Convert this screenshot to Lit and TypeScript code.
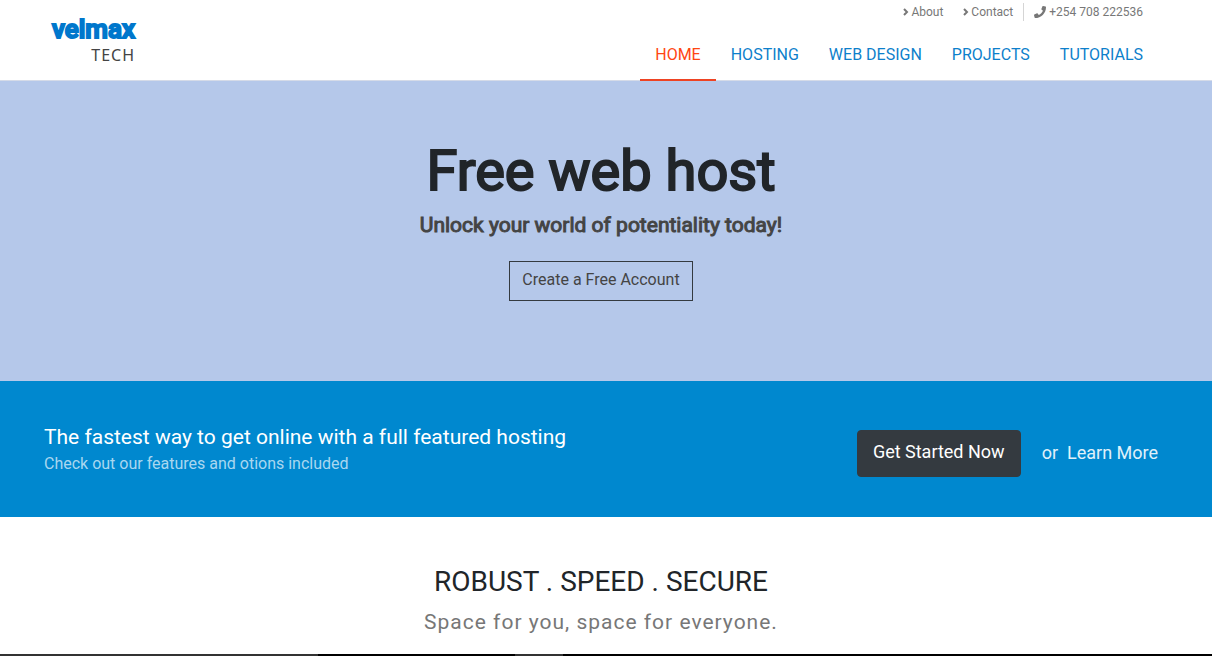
import { LitElement, html, css, svg } from "lit";
import { customElement } from "lit/decorators.js";

const NAV = ["Home", "Hosting", "Web Design", "Projects", "Tutorials"];

const chevron = html`<svg class="chevron" viewBox="0 0 6 8" aria-hidden="true">
  ${svg`<path d="M1 1l3 3-3 3" fill="none" stroke="currentColor" stroke-width="2" />`}
</svg>`;

const phone = html`<svg class="phone" viewBox="0 0 512 512" aria-hidden="true">
  ${svg`<path fill="currentColor" d="M493.4 24.6l-104-24c-11.3-2.6-22.9 3.3-27.5 13.9l-48 112c-4.2 9.8-1.4 21.3 6.9 28l60.6 49.6c-36 76.7-98.9 140.5-177.2 177.2l-49.6-60.6c-6.8-8.3-18.2-11.1-28-6.9l-112 48C3.9 366.5-2 378.1.6 389.4l24 104C27.1 504.2 36.7 512 48 512c256.1 0 464-207.5 464-464 0-11.2-7.7-20.9-18.6-23.4z" />`}
</svg>`;

@customElement("app-root")
export class AppRoot extends LitElement {
  static styles = css`
    :host {
      display: flex;
      flex-direction: column;
      min-height: 100vh;
      box-sizing: border-box;
      background: #fff;
      color: #212529;
      font-family: Roboto, "Liberation Sans", sans-serif;
      font-size: 16px;
      line-height: 24px;
    }
    * {
      box-sizing: border-box;
    }
    a {
      color: inherit;
      text-decoration: none;
    }
    h1,
    h2,
    p,
    ul {
      margin: 0;
      padding: 0;
    }
    ul {
      list-style: none;
    }
    .header {
      display: flex;
      justify-content: space-between;
      border-bottom: 1px solid #d5dbe8;
      padding: 0 54px 0 44px;
      height: 81px;
    }
    .logo {
      display: flex;
      flex-direction: column;
      align-items: flex-end;
      padding: 14px 0 0 8px;
    }
    .brand {
      color: #0077cc;
      font-size: 26px;
      font-weight: 500;
      line-height: 30px;
      -webkit-text-stroke: 2px #0077cc;
      stroke-linejoin: round;
    }
    .sub {
      color: #444;
      font-family: "Noto Sans", sans-serif;
      font-size: 16px;
      line-height: 22px;
      letter-spacing: 1px;
    }
    .menus {
      display: flex;
      flex-direction: column;
      align-items: flex-end;
      justify-content: space-between;
      margin-bottom: -1px;
    }
    .top {
      display: flex;
      align-items: center;
      padding-right: 15px;
      height: 24px;
      color: #777;
      font-size: 12px;
      line-height: 18px;
    }
    .top a {
      display: flex;
      align-items: center;
      gap: 2px;
    }
    .top .contact {
      margin-left: 20px;
    }
    .top .tel {
      gap: 3px;
      margin-left: 10px;
      padding-left: 10px;
      border-left: 1px solid #d5d5d5;
    }
    .chevron {
      width: 6px;
      height: 8px;
    }
    .phone {
      width: 12px;
      height: 12px;
    }
    .nav {
      display: flex;
    }
    .nav a {
      display: block;
      padding: 0 15px 12px;
      border-bottom: 2px solid transparent;
      color: #0d7fcb;
      text-transform: uppercase;
    }
    .nav .active {
      color: #ff4612;
      border-color: #ee4323;
    }
    .hero {
      display: flex;
      flex-direction: column;
      align-items: center;
      padding: 56px 10px 80px 0;
      background: #b5c8ea;
      text-align: center;
    }
    .title {
      font-size: 56px;
      font-weight: 400;
      line-height: 68px;
      -webkit-text-stroke: 2px currentColor;
    }
    .lead {
      margin-top: 6px;
      color: #444;
      font-size: 21px;
      font-weight: 400;
      line-height: 28px;
      -webkit-text-stroke: 1px currentColor;
    }
    .outline {
      margin-top: 22px;
      padding: 6px 12px 8px;
      border: 1px solid #343a40;
      background: transparent;
      color: #444;
      font: inherit;
    }
    .cta {
      display: flex;
      align-items: center;
      justify-content: space-between;
      padding: 42px 54px 40px 44px;
      background: #0088cf;
    }
    .cta-title {
      color: #fff;
      font-size: 21px;
      font-weight: 400;
      line-height: 28px;
    }
    .cta-text {
      margin-top: 1px;
      padding-bottom: 1px;
      color: #a9d7ef;
    }
    .actions {
      display: flex;
      align-items: center;
      margin-top: 6px;
      color: #e0f1fa;
      font-size: 18px;
    }
    .start {
      margin-right: 21px;
      padding: 9px 15px 12px;
      border: 1px solid #343a40;
      border-radius: 4px;
      background: #343a40;
      color: #fff;
      font: inherit;
    }
    .more {
      margin-left: 9px;
    }
    .intro {
      flex: 1;
      padding: 45px 10px 12px 0;
      text-align: center;
    }
    .intro-title {
      font-size: 28px;
      font-weight: 400;
      line-height: 40px;
    }
    .intro-text {
      margin-top: 6px;
      color: #777;
      font-size: 21px;
      line-height: 28px;
      letter-spacing: 1px;
    }
    .strip {
      display: grid;
      grid-template-columns: 318fr 197fr 48fr 649fr;
      height: 2px;
      background: #000;
    }
    .shade {
      background: #333;
    }
    .shade.end {
      grid-column: 3;
    }
  `;

  render() {
    return html`
      <header class="header">
        <a class="logo" href="#"><span class="brand">velmax</span><span class="sub">TECH</span></a>
        <div class="menus">
          <div class="top">
            <a href="#about">${chevron}About</a>
            <a class="contact" href="#contact">${chevron}Contact</a>
            <a class="tel" href="tel:+254708222536">${phone}+254 708 222536</a>
          </div>
          <nav>
            <ul class="nav">
              ${NAV.map(
                (name, i) => html`<li><a class=${i === 0 ? "active" : ""} href="#">${name}</a></li>`
              )}
            </ul>
          </nav>
        </div>
      </header>
      <section class="hero">
        <h1 class="title">Free web host</h1>
        <p class="lead">Unlock your world of potentiality today!</p>
        <button class="outline" type="button">Create a Free Account</button>
      </section>
      <section class="cta">
        <div>
          <h2 class="cta-title">The fastest way to get online with a full featured hosting</h2>
          <p class="cta-text">Check out our features and otions included</p>
        </div>
        <div class="actions">
          <button class="start" type="button">Get Started Now</button>
          <span>or</span>
          <a class="more" href="#learn">Learn More</a>
        </div>
      </section>
      <section class="intro">
        <h2 class="intro-title">ROBUST . SPEED . SECURE</h2>
        <p class="intro-text">Space for you, space for everyone.</p>
      </section>
      <div class="strip"><span class="shade"></span><span class="shade end"></span></div>
    `;
  }
}
